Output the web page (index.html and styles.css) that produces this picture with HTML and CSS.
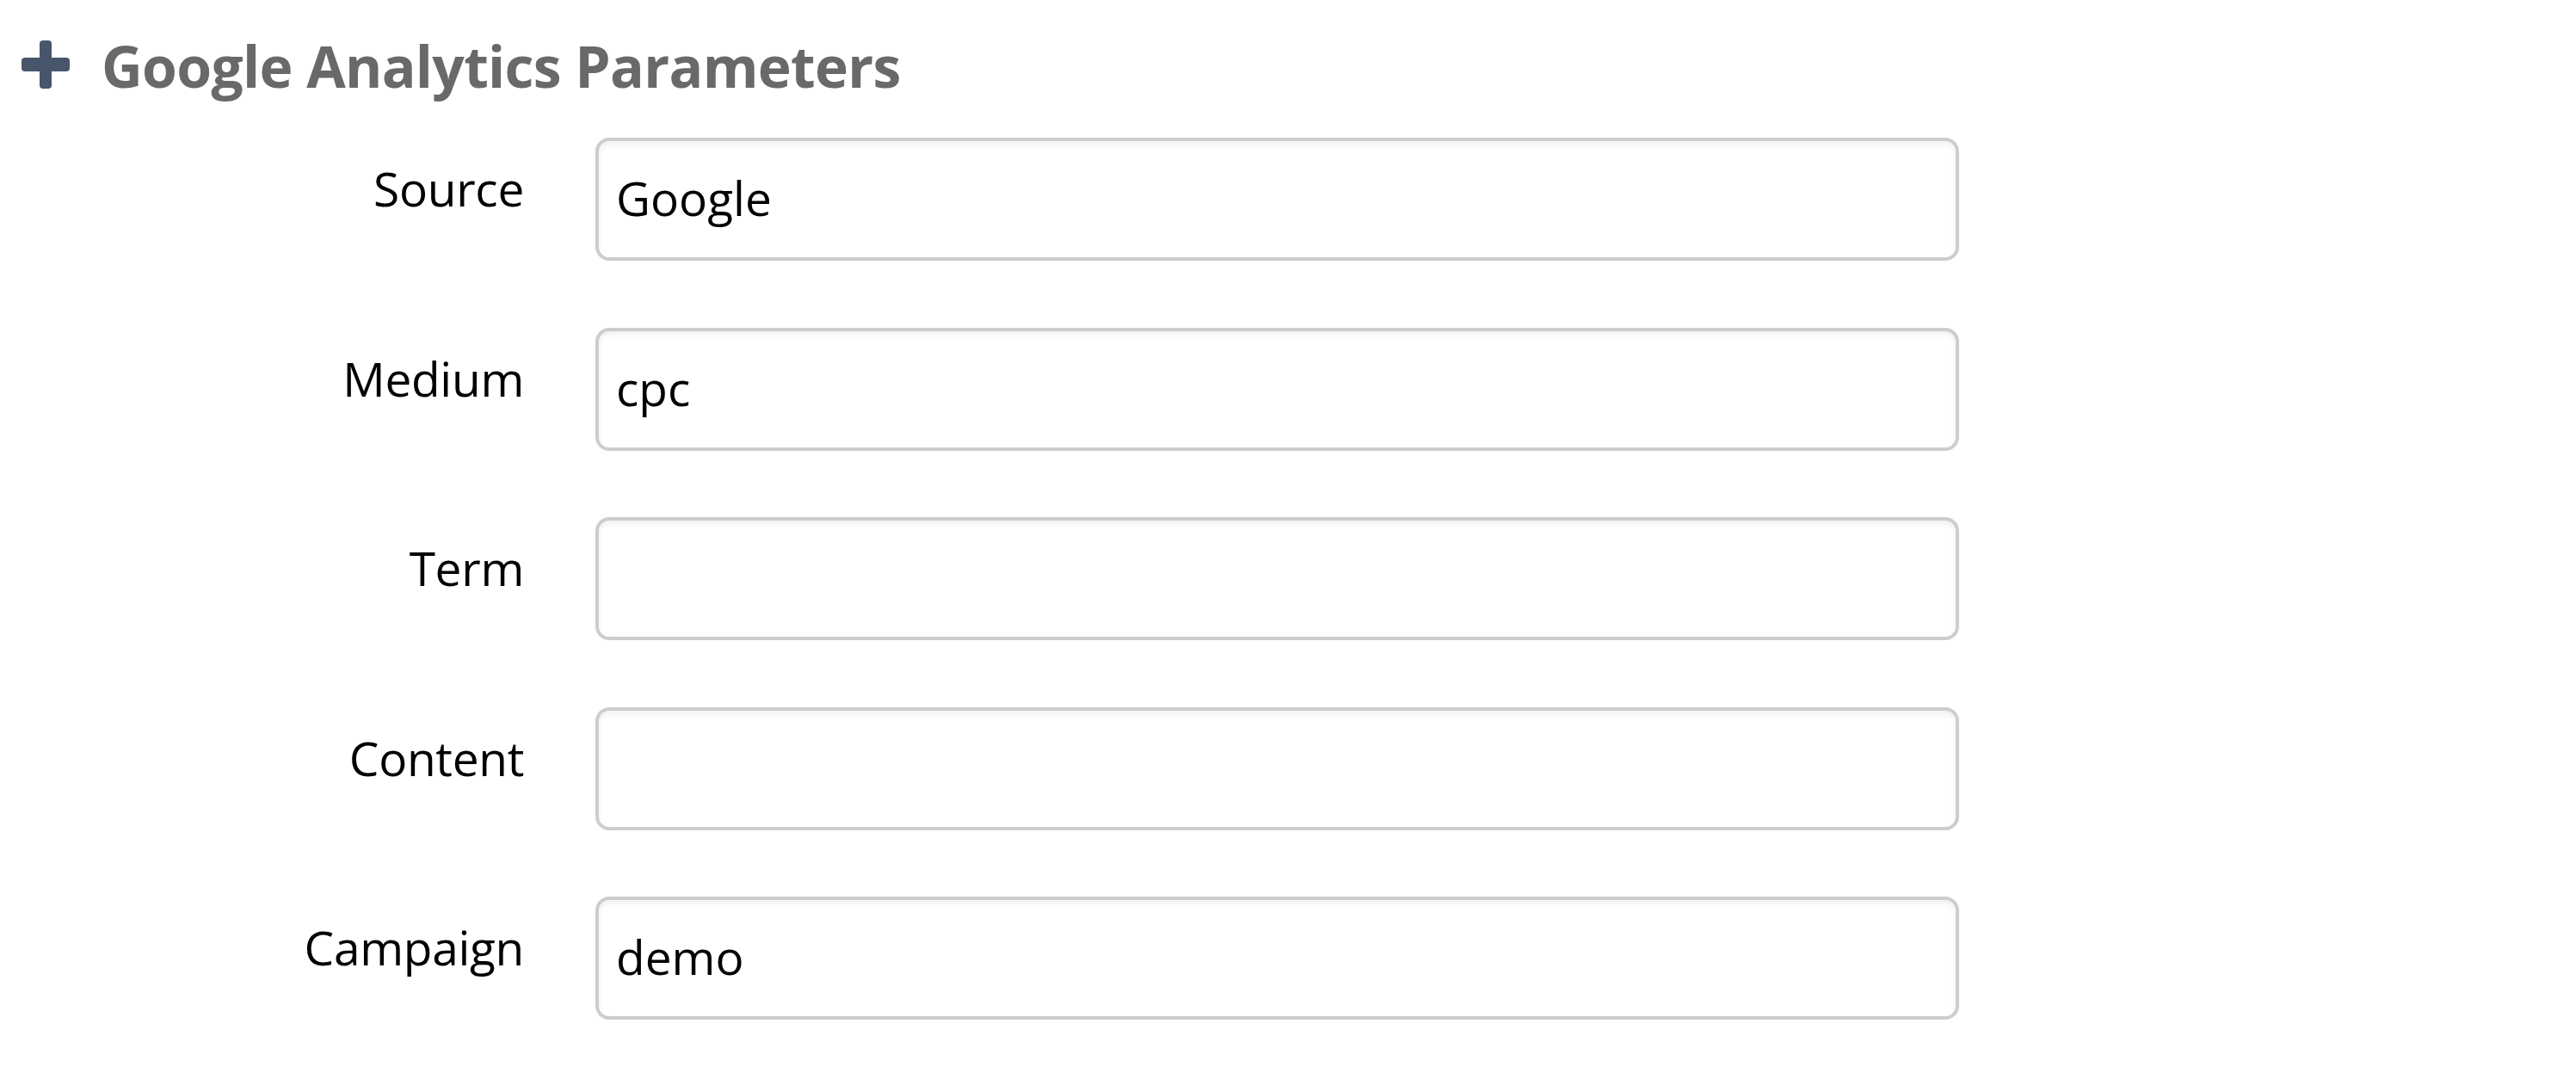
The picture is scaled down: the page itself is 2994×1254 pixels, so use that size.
FILE: index.html
```html
<!DOCTYPE html>
<html>
<head>
<meta charset="utf-8">
<link rel="stylesheet" href="styles.css">
</head>
<body>
<section class="section">
  <div class="section-title">
    <svg class="plus" viewBox="0 0 56 56" width="56" height="56" aria-hidden="true">
      <rect x="21" y="0" width="14" height="56" rx="4" fill="#47566a"/>
      <rect x="0" y="20" width="56" height="16" rx="4" fill="#47566a"/>
    </svg>
    <h2 class="title">Google Analytics Parameters</h2>
  </div>
  <div class="form">
    <div class="row"><label class="label">Source</label><input class="field" type="text" value="Google"></div>
    <div class="row"><label class="label">Medium</label><input class="field" type="text" value="cpc"></div>
    <div class="row"><label class="label">Term</label><input class="field" type="text" value=""></div>
    <div class="row"><label class="label">Content</label><input class="field" type="text" value=""></div>
    <div class="row"><label class="label">Campaign</label><input class="field" type="text" value="demo"></div>
  </div>
</section>
</body>
</html>
```

FILE: styles.css
```css
html, body {
  margin: 0;
  padding: 0;
  background: #ffffff;
}
body {
  font-family: "Open Sans", "Noto Sans", sans-serif;
  color: #000;
}
.section {
  padding-top: 42px;
}
.section-title {
  display: flex;
  align-items: center;
  height: 68px;
  padding-left: 25px;
}
.plus {
  display: block;
  flex: none;
  width: 56px;
  height: 56px;
  margin-top: -2px;
}
.title {
  margin: 0 0 0 37px;
  font-size: 66px;
  line-height: 68px;
  font-weight: 700;
  letter-spacing: -0.7px;
  color: #696969;
}
.form {
  display: flex;
  flex-direction: column;
  gap: 77.5px;
  margin-top: 50px;
}
.row {
  display: grid;
  grid-template-columns: 609px 1585px;
  column-gap: 83px;
  align-items: start;
}
.label {
  text-align: right;
  font-size: 55px;
  line-height: 55px;
  margin-top: 31px;
  letter-spacing: -0.3px;
  color: #000;
}
.field {
  box-sizing: border-box;
  width: 1585px;
  height: 143px;
  margin: 0;
  border: 4px solid #cdcdcd;
  border-radius: 16px;
  box-shadow: inset 0 4px 6px rgba(0, 0, 0, 0.06);
  padding: 0 20px 4px 20px;
  font-family: "Open Sans", "Noto Sans", sans-serif;
  font-size: 55px;
  color: #000;
  background: #fff;
  outline: none;
}
```
